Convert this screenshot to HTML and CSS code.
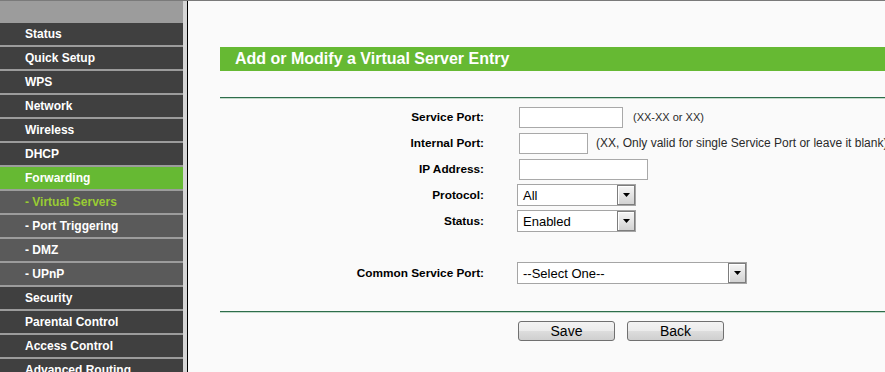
FILE: index.html
```html
<!DOCTYPE html>
<html>
<head>
<meta charset="utf-8">
<title>Virtual Servers</title>
<link rel="stylesheet" href="styles.css">
</head>
<body>
<div class="page">
  <nav class="sidebar">
    <div class="item">Status</div>
    <div class="item">Quick Setup</div>
    <div class="item">WPS</div>
    <div class="item">Network</div>
    <div class="item">Wireless</div>
    <div class="item">DHCP</div>
    <div class="item item-active">Forwarding</div>
    <div class="item sub sub-active">- Virtual Servers</div>
    <div class="item sub">- Port Triggering</div>
    <div class="item sub">- DMZ</div>
    <div class="item sub">- UPnP</div>
    <div class="item">Security</div>
    <div class="item">Parental Control</div>
    <div class="item">Access Control</div>
    <div class="item">Advanced Routing</div>
  </nav>
  <div class="divider"></div>
  <main class="main">
    <div class="title">Add or Modify a Virtual Server Entry</div>
    <div class="rule rule-top"></div>
    <div class="form">
      <div class="label">Service Port:</div>
      <div class="field"><span class="input w-service"></span><span class="hint hint-service">(XX-XX or XX)</span></div>

      <div class="label">Internal Port:</div>
      <div class="field"><span class="input w-internal"></span><span class="hint hint-internal">(XX, Only valid for single Service Port or leave it blank)</span></div>

      <div class="label">IP Address:</div>
      <div class="field"><span class="input w-ip"></span></div>

      <div class="label">Protocol:</div>
      <div class="field">
        <div class="select w-small"><span class="value">All</span><span class="arrow"><svg width="7" height="4" viewBox="0 0 7 4"><polygon points="0,0 7,0 3.5,4" fill="#000"/></svg></span></div>
      </div>

      <div class="label">Status:</div>
      <div class="field">
        <div class="select w-small"><span class="value">Enabled</span><span class="arrow"><svg width="7" height="4" viewBox="0 0 7 4"><polygon points="0,0 7,0 3.5,4" fill="#000"/></svg></span></div>
      </div>

      <div class="label"></div>
      <div class="field"></div>

      <div class="label">Common Service Port:</div>
      <div class="field">
        <div class="select w-large"><span class="value">--Select One--</span><span class="arrow"><svg width="7" height="4" viewBox="0 0 7 4"><polygon points="0,0 7,0 3.5,4" fill="#000"/></svg></span></div>
      </div>
    </div>
    <div class="rule rule-bottom"></div>
    <div class="buttons">
      <div></div>
      <div class="btn-group">
        <button class="btn">Save</button>
        <button class="btn">Back</button>
      </div>
    </div>
  </main>
</div>
</body>
</html>
```

FILE: styles.css
```css
html, body {
  margin: 0;
  padding: 0;
  width: 885px;
  height: 372px;
  overflow: hidden;
  background: #fafafa;
  font-family: "Liberation Sans", Arial, sans-serif;
}

.page {
  display: flex;
  border-top: 1px solid #7a7a7a;
  height: 371px;
  overflow: hidden;
}

.sidebar {
  flex: 0 0 183px;
  width: 183px;
  background: #9c9c9c;
  padding-top: 22px;
  display: flex;
  flex-direction: column;
  gap: 2px;
}

.item {
  flex: 0 0 22px;
  height: 22px;
  line-height: 22px;
  padding-left: 25px;
  background: #404040;
  color: #ffffff;
  font-size: 12px;
  font-weight: bold;
  white-space: nowrap;
}

.item-active {
  background: #66b933;
}

.sub {
  background: #5a5a5a;
}

.sub-active {
  color: #99cc33;
}

.divider {
  flex: 0 0 4px;
  background: #d6d6d6;
  border-right: 1px solid #000;
}

.main {
  flex: 1 1 auto;
  min-width: 0;
  background: #fafafa;
  padding-top: 46px;
  padding-left: 32px;
}

.title {
  width: 720px;
  height: 24px;
  line-height: 24px;
  background: #66b933;
  color: #ffffff;
  font-size: 16px;
  font-weight: bold;
  padding-left: 15px;
  white-space: nowrap;
}

.rule {
  width: 740px;
  height: 1px;
  background: #2e6d4b;
  border-bottom: 1px solid #c3dacb;
}

.rule-top {
  margin-top: 26px;
}

.form {
  margin-top: 5px;
  display: grid;
  grid-template-columns: 264px 1fr;
  grid-auto-rows: 26px;
  column-gap: 33px;
  align-items: center;
}

.label {
  text-align: right;
  font-size: 11.8px;
  font-weight: bold;
  color: #000;
  white-space: nowrap;
}

.field {
  display: flex;
  align-items: center;
  white-space: nowrap;
}

.input {
  display: block;
  box-sizing: border-box;
  height: 21px;
  margin-left: 2px;
  background: #ffffff;
  border: 1px solid #a9a9a9;
}

.w-service { width: 104px; }
.w-internal { width: 69px; }
.w-ip { width: 129px; }

.hint {
  color: #2a2a2a;
}

.hint-service {
  margin-left: 10px;
  font-size: 11px;
}

.hint-internal {
  margin-left: 8px;
  font-size: 12px;
}

.select {
  box-sizing: border-box;
  height: 22px;
  display: flex;
  align-items: center;
  justify-content: space-between;
  background: #ffffff;
  border: 1px solid #a5a5a5;
  padding: 0 0 0 5px;
  font-size: 13px;
  color: #000;
}

.w-small { width: 119px; }
.w-large { width: 230px; }

.arrow {
  box-sizing: border-box;
  width: 18px;
  height: 20px;
  display: flex;
  align-items: center;
  justify-content: center;
  border: 1px solid #7d7d7d;
  box-shadow: inset 1px 1px 0 #ffffff;
  background: linear-gradient(#f6f6f6, #d2d2d2);
}

.arrow svg {
  display: block;
}

.rule-bottom {
  margin-top: 25px;
}

.buttons {
  margin-top: 8px;
  display: grid;
  grid-template-columns: 264px 1fr;
  column-gap: 33px;
}

.btn-group {
  display: flex;
  gap: 12px;
  padding-left: 1px;
}

.btn {
  box-sizing: border-box;
  width: 97px;
  height: 20px;
  padding: 0;
  border: 1px solid #707070;
  border-radius: 3px;
  background: linear-gradient(#f3f3f3 0%, #ebebeb 50%, #dddddd 51%, #cfcfcf 100%);
  font-family: "Liberation Sans", Arial, sans-serif;
  font-size: 14px;
  color: #000;
  line-height: 18px;
}
```
